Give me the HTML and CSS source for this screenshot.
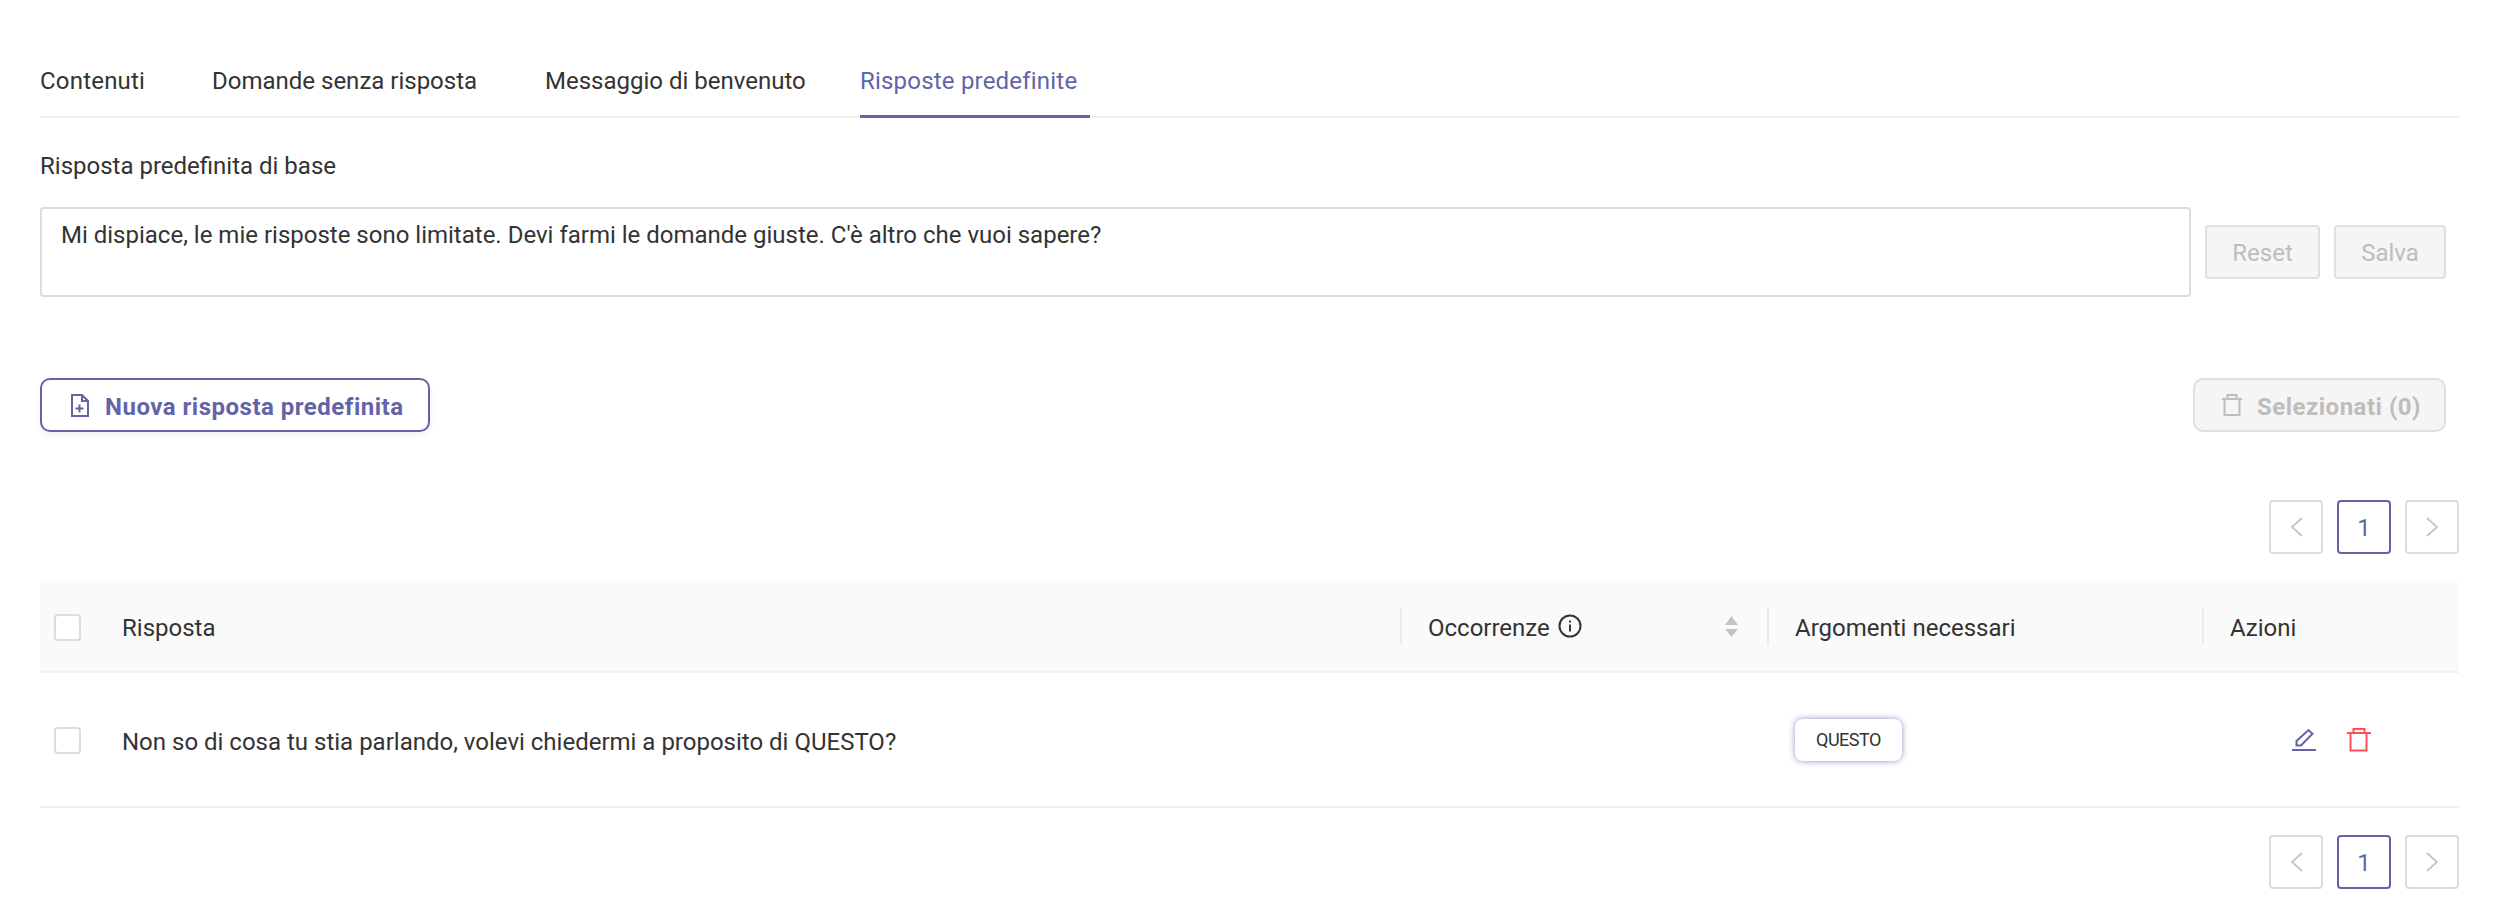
FILE: index.html
```html
<!DOCTYPE html>
<html>
	<head>
		<meta charset="utf-8" lang="it" />
		<title>Risposte predefinite</title>
		<link rel="stylesheet" href="styles.css">
	</head>

	<body>
		<div class="page">
			<nav class="tabs">
				<a class="tab tab-contents">Contenuti</a>
				<a class="tab tab-questions">Domande senza risposta</a>
				<a class="tab tab-welcome">Messaggio di benvenuto</a>
				<a class="tab tab-defaults active">Risposte predefinite</a>
			</nav>

			<p class="field-label">Risposta predefinita di base</p>
			<div class="editor">
				<textarea class="editor-input">Mi dispiace, le mie risposte sono limitate. Devi farmi le domande giuste. C'è altro che vuoi sapere?</textarea>
				<button class="btn btn-reset" disabled>Reset</button>
				<button class="btn btn-save" disabled>Salva</button>
			</div>

			<div class="toolbar">
				<button class="btn-pill btn-new">
					<svg width="18" height="23" viewBox="0 0 18 23" fill="none" stroke="currentColor" stroke-width="2"><path d="M1 1h10l6 6v15H1z"/><path d="M11 1v6h6"/><path d="M8.500 10.500v8M4.500 14.500h8"/></svg>
					<span class="pill-text">Nuova risposta predefinita</span>
				</button>
				<button class="btn-pill btn-delete" disabled>
					<svg width="20" height="22" viewBox="0 0 20 22" fill="none" stroke="currentColor" stroke-width="2"><path d="M0 5h20M5.500 5V1h9v4M2.500 5v16h15V5"/></svg>
					<span class="pill-text">Selezionati (0)</span>
				</button>
			</div>

			<div class="pager pager-top">
				<span class="page-btn"><svg width="13" height="22" viewBox="0 0 13 22" fill="none" stroke="currentColor" stroke-width="1.800"><path d="M12 2 2 11l10 9"/></svg></span>
				<span class="page-btn current">1</span>
				<span class="page-btn"><svg width="13" height="22" viewBox="0 0 13 22" fill="none" stroke="currentColor" stroke-width="1.800"><path d="m1 2 10 9-10 9"/></svg></span>
			</div>

			<table class="list">
				<thead>
					<tr>
						<th class="col-check"><span class="check"></span></th>
						<th class="col-answer"><span class="cell-text">Risposta</span></th>
						<th class="col-count sep">
							<div class="count-head">
								<span class="count-title">
									<span class="cell-text">Occorrenze</span>
									<svg width="24" height="24" viewBox="0 0 24 24" fill="none" stroke="currentColor" stroke-width="2"><circle cx="12" cy="12" r="10.500"/><path d="M12 10.500v7M12 6.500v2"/></svg>
								</span>
								<svg class="sort" width="13" height="21" viewBox="0 0 13 21" fill="#c4c4c4"><path d="M6.500 0 13 9H0zM0 13h13l-6.500 8z"/></svg>
							</div>
						</th>
						<th class="col-args sep"><span class="cell-text">Argomenti necessari</span></th>
						<th class="col-actions sep"><span class="cell-text">Azioni</span></th>
					</tr>
				</thead>
				<tbody>
					<tr>
						<td><span class="check"></span></td>
						<td><span class="cell-text">Non so di cosa tu stia parlando, volevi chiedermi a proposito di QUESTO?</span></td>
						<td></td>
						<td><span class="chip">QUESTO</span></td>
						<td>
							<div class="actions">
								<svg width="26" height="24" viewBox="0 0 26 24" fill="none" stroke="#6264a7" stroke-width="2"><path d="M5.500 17.500V13L17.500 2l4 3.800L10 17.500z"/><path d="M1 22h24"/></svg>
								<svg width="24" height="24" viewBox="0 0 24 24" fill="none" stroke="#fd4f55" stroke-width="2"><path d="M0 5h24M6.500 5V1h11v4M3.500 5v17.500h16V5"/></svg>
							</div>
						</td>
					</tr>
				</tbody>
			</table>

			<div class="pager pager-bottom">
				<span class="page-btn"><svg width="13" height="22" viewBox="0 0 13 22" fill="none" stroke="currentColor" stroke-width="1.800"><path d="M12 2 2 11l10 9"/></svg></span>
				<span class="page-btn current">1</span>
				<span class="page-btn"><svg width="13" height="22" viewBox="0 0 13 22" fill="none" stroke="currentColor" stroke-width="1.800"><path d="m1 2 10 9-10 9"/></svg></span>
			</div>
		</div>
	</body>
</html>
```

FILE: styles.css
```css
body {
	background: #fff;
	color: #333;
	font-family: Roboto, Arial, sans-serif;
	font-size: 24px;
	line-height: 32px;
	margin: 0;
}
button,
textarea {
	font-family: inherit;
	font-size: inherit;
}
.page { padding: 0 41px 0 40px; }


/* Tabs */
.tabs {
	border-bottom: 2px solid #f0f0f0;
	display: flex;
}
.tab {
	border-bottom: 3px solid transparent;
	margin-bottom: -2px;
	padding: 65px 0 18px;
}
.tab-contents {
	letter-spacing: 0.2px;
	width: 172px;
}
.tab-questions { width: 333px; }
.tab-welcome { width: 315px; }
.tab-defaults {
	letter-spacing: 0.2px;
	width: 230px;
}
.tab.active {
	border-bottom-color: #6264a7;
	color: #6264a7;
}


/* Default answer */
.field-label { margin: 32px 0 25px; }
.editor {
	align-items: center;
	display: flex;
	gap: 14px;
	padding-right: 13px;
}
.editor-input {
	border: 2px solid #dcdcdc;
	border-radius: 4px;
	box-sizing: border-box;
	color: inherit;
	flex: 1;
	height: 90px;
	line-height: 32px;
	padding: 10px 19px;
	resize: none;
}
.btn {
	background: #f5f5f5;
	border: 2px solid #e0e0e0;
	border-radius: 4px;
	color: #bdbdbd;
	height: 54px;
	padding: 2px 0 0;
}
.btn-reset { width: 115px; }
.btn-save { width: 112px; }


/* Toolbar */
.toolbar {
	display: flex;
	justify-content: space-between;
	margin-top: 81px;
	padding-right: 13px;
}
.btn-pill {
	align-items: center;
	border: 2px solid;
	border-radius: 10px;
	display: flex;
	font-weight: 700;
	height: 54px;
	letter-spacing: 0.5px;
	padding: 0;
}
.pill-text { margin-top: 4px; }
.btn-new {
	background: #fff;
	border-color: #6264a7;
	box-shadow: 0 3px 6px rgba(0, 0, 0, 0.06);
	color: #6264a7;
	gap: 16px;
	padding-left: 29px;
	width: 390px;
}
.btn-delete {
	background: #f5f5f5;
	border-color: #e0e0e0;
	color: #bdbdbd;
	gap: 15px;
	padding-left: 27px;
	width: 253px;
}


/* Pager */
.pager {
	display: flex;
	gap: 14px;
	justify-content: flex-end;
}
.pager-top { margin: 68px 0 27px; }
.pager-bottom { margin-top: 27px; }
.page-btn {
	align-items: center;
	border: 2px solid #dcdcdc;
	border-radius: 4px;
	box-sizing: border-box;
	color: #c4c4c4;
	display: flex;
	height: 54px;
	justify-content: center;
	width: 54px;
}
.page-btn.current {
	border-color: #6264a7;
	color: #6264a7;
	padding-top: 2px;
}


/* List */
.list {
	border-collapse: separate;
	border-spacing: 0;
	table-layout: fixed;
	width: 100%;
}
.list th,
.list td {
	border-bottom: 2px solid #f0f0f0;
	box-sizing: border-box;
	padding: 0 0 0 28px;
}
.list th {
	background: #fafafa;
	font-weight: 400;
	height: 92px;
	position: relative;
	text-align: left;
}
.list td { height: 135px; }
.list th:first-child { border-top-left-radius: 4px; }
.list th:last-child { border-top-right-radius: 4px; }
.list th:first-child,
.list td:first-child,
.list th:nth-child(2),
.list td:nth-child(2) { padding-left: 0; }
.list .check { margin: 2px 0 0 14px; }
.cell-text {
	display: inline-block;
	padding-top: 4px;
}
.col-check { width: 82px; }
.col-answer { width: 1278px; }
.col-count { width: 367px; }
.col-args { width: 435px; }
.sep::before {
	background: #ececec;
	content: '';
	height: 37px;
	left: 0;
	position: absolute;
	top: 27px;
	width: 2px;
}
.check {
	background: #fff;
	border: 2px solid #dcdcdc;
	border-radius: 4px;
	box-sizing: border-box;
	display: block;
	height: 27px;
	width: 27px;
}
.count-head {
	align-items: center;
	display: flex;
	justify-content: space-between;
	padding-right: 29px;
}
.count-title {
	align-items: center;
	display: flex;
	gap: 8px;
}
.chip {
	background: #fff;
	border-radius: 8px;
	box-shadow: 0 0 6px rgba(98, 100, 167, 0.7);
	display: block;
	font-size: 18px;
	height: 42px;
	letter-spacing: -0.5px;
	line-height: 42px;
	margin-top: 1px;
	text-align: center;
	width: 107px;
}
.actions {
	align-items: center;
	display: flex;
	gap: 30px;
	margin: 1px 0 0 61px;
}
```
